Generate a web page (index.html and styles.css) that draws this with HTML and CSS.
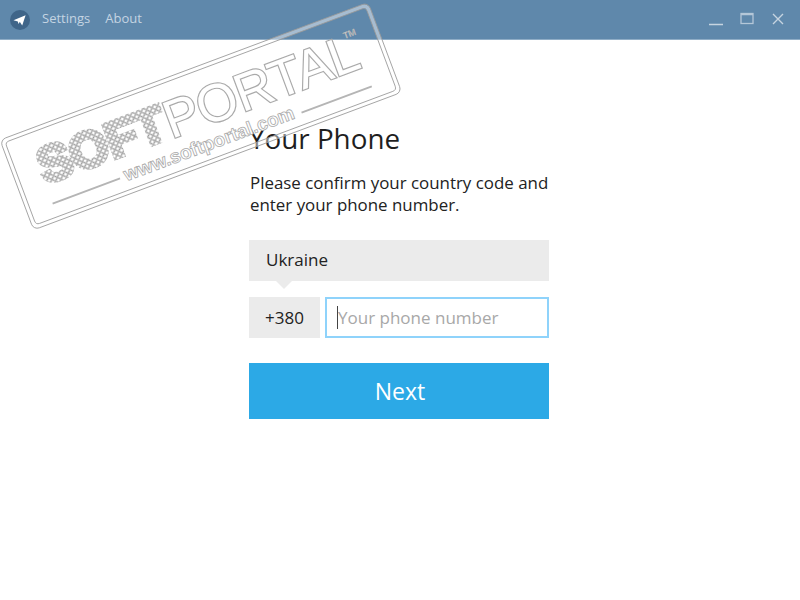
FILE: index.html
```html
<!DOCTYPE html>
<html lang="en">
<head>
    <meta charset="UTF-8">
    <meta name="viewport" content="width=device-width, initial-scale=1.0">
    <title>Telegram</title>
    <link rel="stylesheet" href="styles.css">
</head>
<body>
    <div class="title-bar">
        <svg class="app-logo" width="20" height="20" viewBox="0 0 20 20">
            <circle cx="10" cy="10" r="10" fill="#3f6589"/>
            <path d="M3.5 10.2 15.6 5.2 12.2 15.6 9.8 11.8 8.6 14 7.8 11.4z" fill="#fff"/>
        </svg>
        <a class="menu-item">Settings</a>
        <a class="menu-item">About</a>
        <div class="window-controls">
            <svg width="14" height="14" viewBox="0 0 14 14"><path d="M0 12.5H14" stroke="#c6d4e0" stroke-width="1.5"/></svg>
            <svg width="14" height="14" viewBox="0 0 14 14"><rect x="1" y="1.5" width="12" height="10" fill="none" stroke="#b4c7d8" stroke-width="1.3"/><path d="M1 2.5H13" stroke="#b4c7d8" stroke-width="1.5"/></svg>
            <svg width="14" height="14" viewBox="0 0 14 14"><path d="M2 2 12 12M12 2 2 12" stroke="#c6d4e0" stroke-width="1.4"/></svg>
        </div>
    </div>

    <main class="login-form">
        <h1>Your Phone</h1>
        <p>Please confirm your country code and<br>enter your phone number.</p>
        <div class="country-select">Ukraine</div>
        <div class="phone-row">
            <div class="country-code">+380</div>
            <div class="phone-input">
                <input type="text" placeholder="Your phone number">
            </div>
        </div>
        <button class="next-button">Next</button>
    </main>

    <!-- watermark stamp over the page -->
    <svg class="watermark" width="420" height="240" viewBox="0 0 420 240">
        <defs>
            <pattern id="dots" width="5.8" height="5.8" patternUnits="userSpaceOnUse">
                <rect width="5.8" height="5.8" fill="#fff"/>
                <circle cx="2.9" cy="2.9" r="2.2" fill="#fff" stroke="#8e8e8e" stroke-width="1"/>
            </pattern>
        </defs>
        <g transform="translate(0 140) rotate(-20.5)">
            <rect class="stamp-band" x="2" y="2" width="389" height="92" rx="5"/>
            <rect class="stamp-line" x="0" y="0" width="393" height="96" rx="6"/>
            <rect class="stamp-line" x="4" y="4" width="385" height="88" rx="4"/>
            <text class="stamp-soft" x="27" y="57">SOFT</text>
            <text class="stamp-portal" x="161" y="59">PORTAL</text>
            <text class="stamp-tm" x="358" y="26">TM</text>
            <text class="stamp-url" x="104" y="83">www.softportal.com</text>
            <path class="stamp-rule" d="M27 78H99M292 80H367"/>
        </g>
    </svg>
</body>
</html>
```

FILE: styles.css
```css
body {
    font-family: 'Open Sans', 'Noto Sans', sans-serif;
    background-color: #fff;
    color: #222;
    margin: 0;
    height: 600px;
    overflow: hidden;
    position: relative;
}

.title-bar {
    display: flex;
    align-items: center;
    height: 39px;
    padding-left: 10px;
    background: #5f88ab;
    border-bottom: 1px solid #8fadc6;
}

.app-logo {
    margin-right: 12px;
}

.menu-item {
    margin-right: 15px;
    margin-bottom: 3px;
    font-size: 13px;
    color: #c4d4e2;
}

.window-controls {
    display: flex;
    align-items: center;
    gap: 17px;
    margin-left: auto;
    margin-right: 15px;
    margin-bottom: 2px;
}

.login-form {
    width: 300px;
    margin: 0 auto;
    padding-top: 79px;
    position: relative;
    left: -1px;
}

.login-form h1 {
    margin: 0;
    font-size: 27.8px;
    font-weight: 400;
    line-height: 38px;
    color: #1f1f1f;
}

.login-form p {
    margin: 15px 0 0 1px;
    font-size: 16.9px;
    line-height: 22px;
    white-space: nowrap;
    color: #222;
}

.country-select {
    position: relative;
    height: 41px;
    margin-top: 24px;
    padding-left: 17px;
    background: #ebebeb;
    font-size: 17px;
    line-height: 39px;
}

.country-select::after {
    content: '';
    position: absolute;
    left: 27px;
    top: 41px;
    border: 8px solid transparent;
    border-bottom: 0;
    border-top-color: #ebebeb;
}

.phone-row {
    display: flex;
    gap: 5px;
    margin-top: 16px;
}

.country-code {
    width: 71px;
    height: 41px;
    background: #ebebeb;
    font-size: 17px;
    line-height: 41px;
    text-align: center;
}

.phone-input {
    position: relative;
    flex: 1;
}

.phone-input::before {
    content: '';
    position: absolute;
    left: 12px;
    top: 9px;
    width: 1px;
    height: 23px;
    background: #444;
}

.phone-input input {
    width: 100%;
    height: 41px;
    padding: 0 0 0 11px;
    box-sizing: border-box;
    border: 2px solid #8fd3fb;
    outline: none;
    font-family: inherit;
    font-size: 17px;
}

.phone-input input::placeholder {
    color: #a8a8a8;
    opacity: 1;
}

.next-button {
    display: block;
    width: 100%;
    height: 56px;
    margin-top: 25px;
    padding-left: 8px;
    background: #2ca9e6;
    color: #fff;
    border: none;
    font-family: inherit;
    font-size: 23px;
}

.watermark {
    position: absolute;
    left: 0;
    top: 0;
    font-family: 'Liberation Sans', sans-serif;
    pointer-events: none;
}

.stamp-band {
    fill: none;
    stroke: #fff;
    stroke-width: 4;
    stroke-opacity: 0.45;
}

.stamp-line {
    fill: none;
    stroke: #9a9a9a;
    stroke-width: 0.8;
}

.stamp-rule {
    fill: none;
    stroke: #b5b5b5;
    stroke-width: 2;
}

.stamp-soft {
    font-size: 50px;
    font-weight: 700;
    fill: url(#dots);
    stroke: url(#dots);
    stroke-width: 5;
}

.stamp-portal {
    font-size: 53px;
    letter-spacing: -0.5px;
    fill: #fff;
    stroke: #aaa;
    stroke-width: 2.4;
    paint-order: stroke;
}

.stamp-tm {
    font-size: 9px;
    fill: #fff;
    stroke: #999;
    stroke-width: 0.4;
}

.stamp-url {
    font-size: 19px;
    font-weight: 700;
    fill: #fff;
    stroke: #aaa;
    stroke-width: 0.8;
}
```
